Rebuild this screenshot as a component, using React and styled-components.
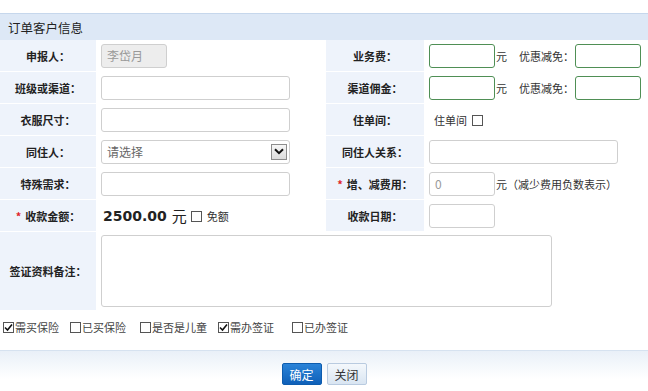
import React from 'react'
import styled, { createGlobalStyle } from 'styled-components'

const Global = createGlobalStyle`
  html, body { margin: 0; padding: 0; background: #fff; }
  body {
    font-family: "Noto Sans CJK SC", "DejaVu Sans", sans-serif;
    font-size: 11px;
    color: #333;
  }
`

const Page = styled.div`
  width: 648px;
  height: 391px;
  padding-top: 13px;
  box-sizing: border-box;
  display: flex;
  flex-direction: column;
  overflow: hidden;
`

const Header = styled.div`
  height: 27px;
  flex: none;
  border-top: 1px solid #c6d7ec;
  box-sizing: border-box;
  background: #dde8f6;
  display: flex;
  align-items: center;
  padding-left: 8px;
  font-size: 12.5px;
  color: #222;
`

const Grid = styled.div`
  display: grid;
  grid-template-columns: 96px 230px 98px 1fr;
  grid-template-rows: repeat(6, 31px) 78px;
  row-gap: 1px;
  background: #fff;
  flex: none;
`

const Label = styled.div`
  background: #eef3fb;
  display: flex;
  align-items: center;
  justify-content: center;
  font-weight: bold;
  color: #222;
  white-space: nowrap;
`

const Star = styled.span`
  color: #e0242a;
  margin-right: 4px;
`

const Cell = styled.div`
  display: flex;
  align-items: center;
  padding-left: ${({ $pad }) => $pad || 5}px;
  white-space: nowrap;
  grid-column: ${({ $span }) => ($span ? `span ${$span}` : 'auto')};
`

const Input = styled.div`
  width: ${({ $w }) => $w}px;
  height: 24px;
  flex: none;
  box-sizing: border-box;
  border: 1px solid ${({ $green }) => ($green ? '#4f8f55' : '#cfcfcf')};
  border-radius: 3px;
  background: ${({ $disabled }) => ($disabled ? '#ededed' : '#fff')};
  color: #999;
  display: flex;
  align-items: center;
  padding-left: 5px;
  font-size: 12px;
`

const Select = styled(Input)`
  justify-content: space-between;
  padding-right: 2px;
  color: #666;
`

const Arrow = styled.div`
  width: 16px;
  height: 16px;
  box-sizing: border-box;
  border: 1px solid #8c8c8c;
  background: linear-gradient(#f6f6f6, #dcdcdc);
  display: flex;
  align-items: center;
  justify-content: center;
`

const Unit = styled.span`
  margin-left: 1px;
  color: #333;
`

const Sub = styled.span`
  margin-left: 12px;
  margin-right: 1px;
  color: #333;
`

const Area = styled.div`
  width: 451px;
  height: 72px;
  box-sizing: border-box;
  border: 1px solid #cfcfcf;
  border-radius: 3px;
  background: #fff;
`

const Money = styled.span`
  font-family: "DejaVu Sans", sans-serif;
  font-weight: bold;
  font-size: 14px;
  color: #222;
  margin-left: 2px;
`

const MoneyUnit = styled.span`
  font-size: 15px;
  color: #222;
  margin-left: 5px;
  margin-right: 4px;
`

const BoxWrap = styled.span`
  width: 11px;
  height: 11px;
  box-sizing: border-box;
  border: 1px solid #555;
  background: #fff;
  display: inline-flex;
  align-items: center;
  justify-content: center;
  margin: ${({ $m }) => $m || '0'};
  flex: none;
`

const Check = ({ on, m }) => (
  <BoxWrap $m={m}>
    {on && (
      <svg width="9" height="9" viewBox="0 0 9 9">
        <path d="M1 4.5 L3.5 7 L8 1.5" fill="none" stroke="#111" strokeWidth="1.6" />
      </svg>
    )}
  </BoxWrap>
)

const Options = styled.div`
  display: flex;
  align-items: center;
  height: 18px;
  margin-top: 8px;
  padding-left: 3px;
  color: #444;
  flex: none;
`

const Option = styled.label`
  display: flex;
  align-items: center;
  white-space: nowrap;
  width: ${({ $w }) => $w}px;
`

const Footer = styled.div`
  margin-top: 14px;
  flex: 1;
  border-top: 1px solid #d6e2f0;
  background: linear-gradient(#e9f0f8, #fff 70%);
  display: flex;
  justify-content: center;
  align-items: flex-start;
  padding-top: 12px;
  gap: 5px;
`

const Button = styled.button`
  width: 40px;
  height: 22px;
  padding: 0;
  font-family: inherit;
  font-size: 12px;
  border-radius: 2px;
  border: 1px solid ${({ $primary }) => ($primary ? '#0d5cae' : '#b9cbe0')};
  background: ${({ $primary }) =>
    $primary ? 'linear-gradient(#2a83d8, #0f60b8)' : 'linear-gradient(#f4f8fc, #d9e5f2)'};
  color: ${({ $primary }) => ($primary ? '#fff' : '#333')};
`

const Fee = () => (
  <>
    <Input $w={66} $green />
    <Unit>元</Unit>
    <Sub>优惠减免：</Sub>
    <Input $w={66} $green />
  </>
)

export default function App() {
  return (
    <Page>
      <Global />
      <Header>订单客户信息</Header>
      <Grid>
        <Label>申报人：</Label>
        <Cell><Input $w={66} $disabled>李岱月</Input></Cell>
        <Label>业务费：</Label>
        <Cell><Fee /></Cell>

        <Label>班级或渠道：</Label>
        <Cell><Input $w={189} /></Cell>
        <Label>渠道佣金：</Label>
        <Cell><Fee /></Cell>

        <Label>衣服尺寸：</Label>
        <Cell><Input $w={189} /></Cell>
        <Label>住单间：</Label>
        <Cell $pad={10}>
          住单间
          <Check m="2px 0 0 5px" />
        </Cell>

        <Label>同住人：</Label>
        <Cell>
          <Select $w={189}>
            请选择
            <Arrow>
              <svg width="10" height="7" viewBox="0 0 10 7">
                <path d="M1 1.2 L5 5.2 L9 1.2" fill="none" stroke="#111" strokeWidth="2" />
              </svg>
            </Arrow>
          </Select>
        </Cell>
        <Label>同住人关系：</Label>
        <Cell><Input $w={189} /></Cell>

        <Label>特殊需求：</Label>
        <Cell><Input $w={189} /></Cell>
        <Label><Star>*</Star>增、减费用：</Label>
        <Cell>
          <Input $w={66}>0</Input>
          <Unit>元（减少费用负数表示）</Unit>
        </Cell>

        <Label><Star>*</Star>收款金额：</Label>
        <Cell>
          <Money>2500.00</Money>
          <MoneyUnit>元</MoneyUnit>
          <Check m="2px 5px 0 0" />
          免额
        </Cell>
        <Label>收款日期：</Label>
        <Cell><Input $w={66} /></Cell>

        <Label>签证资料备注：</Label>
        <Cell $span={3}><Area /></Cell>
      </Grid>
      <Options>
        <Option $w={67}><Check on m="0 1px 0 0" />需买保险</Option>
        <Option $w={70}><Check m="0 1px 0 0" />已买保险</Option>
        <Option $w={78}><Check m="0 1px 0 0" />是否是儿童</Option>
        <Option $w={74}><Check on m="0 1px 0 0" />需办签证</Option>
        <Option $w={70}><Check m="0 1px 0 0" />已办签证</Option>
      </Options>
      <Footer>
        <Button $primary>确定</Button>
        <Button>关闭</Button>
      </Footer>
    </Page>
  )
}
